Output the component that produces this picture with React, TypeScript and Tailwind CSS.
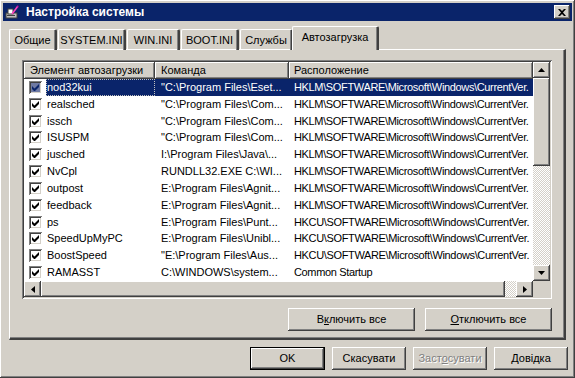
import React from "react";

const raised =
  "shadow-[inset_-1px_-1px_#404040,inset_1px_1px_#ffffff,inset_-2px_-2px_#808080,inset_2px_2px_#d4d0c8]";
const sunken =
  "shadow-[inset_1px_1px_#808080,inset_-1px_-1px_#ffffff,inset_2px_2px_#404040,inset_-2px_-2px_#d4d0c8]";
const checker =
  "bg-[repeating-conic-gradient(#ffffff_0_25%,#d4d0c8_0_50%)] bg-[length:2px_2px]";

const rows = [
  ["nod32kui", "\"C:\\Program Files\\Eset...", "HKLM\\SOFTWARE\\Microsoft\\Windows\\CurrentVer."],
  ["realsched", "\"C:\\Program Files\\Com...", "HKLM\\SOFTWARE\\Microsoft\\Windows\\CurrentVer."],
  ["issch", "\"C:\\Program Files\\Com...", "HKLM\\SOFTWARE\\Microsoft\\Windows\\CurrentVer."],
  ["ISUSPM", "\"C:\\Program Files\\Com...", "HKLM\\SOFTWARE\\Microsoft\\Windows\\CurrentVer."],
  ["jusched", "I:\\Program Files\\Java\\...", "HKLM\\SOFTWARE\\Microsoft\\Windows\\CurrentVer."],
  ["NvCpl", "RUNDLL32.EXE C:\\WI...", "HKLM\\SOFTWARE\\Microsoft\\Windows\\CurrentVer."],
  ["outpost", "E:\\Program Files\\Agnit...", "HKLM\\SOFTWARE\\Microsoft\\Windows\\CurrentVer."],
  ["feedback", "E:\\Program Files\\Agnit...", "HKLM\\SOFTWARE\\Microsoft\\Windows\\CurrentVer."],
  ["ps", "E:\\Program Files\\Punt...", "HKCU\\SOFTWARE\\Microsoft\\Windows\\CurrentVer."],
  ["SpeedUpMyPC", "E:\\Program Files\\Unibl...", "HKCU\\SOFTWARE\\Microsoft\\Windows\\CurrentVer."],
  ["BoostSpeed", "\"E:\\Program Files\\Aus...", "HKCU\\SOFTWARE\\Microsoft\\Windows\\CurrentVer."],
  ["RAMASST", "C:\\WINDOWS\\system...", "Common Startup"],
];

const tabs = [
  { t: "Общие", w: "w-[48px]" },
  { t: "SYSTEM.INI", w: "w-[68px]" },
  { t: "WIN.INI", w: "w-[53px]" },
  { t: "BOOT.INI", w: "w-[58px]" },
  { t: "Службы", w: "w-[53px]" },
];

function Check({ selected }: { selected?: boolean }) {
  return (
    <div
      className={`w-[13px] h-[13px] flex items-center justify-center ${sunken} ${
        selected ? "bg-[#6f7aa3]" : "bg-white"
      }`}
    >
      <svg width="7" height="7" viewBox="0 0 7 7">
        <path d="M0 2v3l2 2h1l4-4V0L2.5 4.5z" fill={selected ? "#0a246a" : "#000"} />
      </svg>
    </div>
  );
}

function Arrow({ dir }: { dir: "up" | "down" | "left" | "right" }) {
  const d = {
    up: "M3.5 0L7 4H0z",
    down: "M0 0h7L3.5 4z",
    left: "M4 0v7L0 3.5z",
    right: "M0 0l4 3.5L0 7z",
  }[dir];
  const w = dir === "up" || dir === "down" ? 7 : 4;
  const h = dir === "up" || dir === "down" ? 4 : 7;
  return (
    <div className={`w-[17px] h-[16px] shrink-0 bg-[#d4d0c8] flex items-center justify-center ${raised}`}>
      <svg width={w} height={h} viewBox={`0 0 ${w} ${h}`}>
        <path d={d} fill="#000" />
      </svg>
    </div>
  );
}

function Btn({
  children,
  w,
  def,
  disabled,
}: {
  children: React.ReactNode;
  w: string;
  def?: boolean;
  disabled?: boolean;
}) {
  return (
    <div className={`${w} h-[23px] ${def ? "border border-black" : ""} shrink-0`}>
      <div
        className={`w-full h-full flex items-center justify-center ${raised} ${
          disabled ? "text-[#808080] [text-shadow:1px_1px_#ffffff]" : "text-black"
        }`}
      >
        {children}
      </div>
    </div>
  );
}

export default function App() {
  return (
    <div
      className={`w-[575px] h-[378px] bg-[#d4d0c8] p-[3px] flex flex-col text-[11px] leading-none text-black ${raised}`}
      style={{ fontFamily: '"Liberation Sans", Arial, sans-serif' }}
    >
      {/* title bar */}
      <div className="h-[18px] bg-[#0a246a] flex items-center px-[2px] shrink-0">
        <svg width="16" height="16" viewBox="0 0 16 16">
          <rect x="1" y="9" width="11" height="5" fill="#c0c0c0" stroke="#404040" strokeWidth="1" />
          <rect x="3" y="5" width="5" height="5" fill="#ffffff" stroke="#404040" strokeWidth="1" />
          <rect x="2" y="11" width="8" height="1" fill="#404040" />
          <path d="M7 10L13 2" stroke="#ff40c0" strokeWidth="1.5" />
          <path d="M12 1l2 1-1 2z" fill="#800080" />
        </svg>
        <span className="ml-[5px] text-white font-bold text-[12px]">Настройка системы</span>
        <div className={`ml-auto w-[16px] h-[14px] bg-[#d4d0c8] flex items-center justify-center ${raised}`}>
          <svg width="8" height="7" viewBox="0 0 8 7">
            <path d="M0 0h2l2 2 2-2h2L5 3.5 8 7H6L4 5 2 7H0l3-3.5z" fill="#000" />
          </svg>
        </div>
      </div>

      {/* tabs */}
      <div className="flex items-end pl-[6px] mt-[5px] h-[24px] relative z-10">
        {tabs.map(({ t, w }) => (
          <div
            key={t}
            className={`${w} h-[21px] shrink-0 flex items-center justify-center border-l border-t border-white border-r-2 border-r-[#404040] rounded-t-[2px] mr-[1px] shadow-[inset_-1px_0_#808080]`}
          >
            {t}
          </div>
        ))}
        <div className="w-[87px] h-[24px] -ml-[2px] shrink-0 flex items-center justify-center bg-[#d4d0c8] border-l border-t border-white border-r-2 border-r-[#404040] rounded-t-[2px] shadow-[inset_-1px_0_#808080] pb-[2px]">
          Автозагрузка
        </div>
      </div>

      {/* tab panel */}
      <div className="mx-[6px] h-[291px] -mt-[1px] border-l border-t border-white border-r-2 border-b-2 border-r-[#404040] border-b-[#404040] shadow-[inset_-1px_-1px_#808080] flex flex-col px-[12px] pt-[10px]">
        {/* list */}
        <div className={`h-[239px] bg-white p-[2px] flex flex-col ${sunken}`}>
          <div className="flex flex-1 min-h-0">
            <div className="flex-1 flex flex-col min-w-0">
              {/* header */}
              <div className="flex h-[17px] shrink-0">
                <div className={`w-[131px] bg-[#d4d0c8] flex items-center pl-[6px] ${raised}`}>Элемент автозагрузки</div>
                <div className={`w-[134px] bg-[#d4d0c8] flex items-center pl-[6px] ${raised}`}>Команда</div>
                <div className={`flex-1 bg-[#d4d0c8] flex items-center pl-[5px] ${raised}`}>Расположение</div>
              </div>
              {rows.map((r, i) => {
                const sel = i === 0;
                return (
                  <div key={r[0]} className="flex h-[17px] items-center whitespace-nowrap overflow-hidden">
                    <div className="w-[131px] flex items-center pl-[5px] shrink-0">
                      <Check selected={sel} />
                      <div
                        className={`ml-[4px] flex-1 h-[17px] flex items-center pl-[1px] ${
                          sel ? "bg-[#0a246a] text-white outline outline-1 outline-dotted outline-[#c0c0c0] -outline-offset-1" : ""
                        }`}
                      >
                        {r[0]}
                      </div>
                    </div>
                    <div className={`w-[134px] h-[17px] flex items-center pl-[6px] shrink-0 ${sel ? "bg-[#0a246a] text-white" : ""}`}>
                      {r[1]}
                    </div>
                    <div
                      className={`flex-1 h-[17px] flex items-center pl-[5px] tracking-[-0.35px] ${sel ? "bg-[#0a246a] text-white" : ""}`}
                    >
                      {r[2]}
                    </div>
                  </div>
                );
              })}
            </div>
            {/* vertical scrollbar */}
            <div className="w-[17px] flex flex-col shrink-0">
              <Arrow dir="up" />
              <div className={`h-[88px] bg-[#d4d0c8] ${raised}`} />
              <div className={`flex-1 ${checker}`} />
              <Arrow dir="down" />
            </div>
          </div>
          {/* horizontal scrollbar */}
          <div className="flex h-[16px] shrink-0">
            <Arrow dir="left" />
            <div className={`w-[464px] bg-[#d4d0c8] ${raised}`} />
            <div className={`flex-1 ${checker}`} />
            <Arrow dir="right" />
            <div className="w-[17px] bg-[#d4d0c8]" />
          </div>
        </div>

        <div className="flex justify-end gap-[10px] mt-[9px]">
          <Btn w="w-[127px]">
            <span>
              В<u>к</u>лючить все
            </span>
          </Btn>
          <Btn w="w-[127px]">
            <span>
              <u>О</u>тключить все
            </span>
          </Btn>
        </div>
      </div>

      {/* bottom buttons */}
      <div className="flex justify-end gap-[7px] mt-[7px] pr-[4px]">
        <Btn w="w-[75px]" def>
          OK
        </Btn>
        <Btn w="w-[74px]">Скасувати</Btn>
        <Btn w="w-[74px]" disabled>
          <span>
            Заст<u>о</u>сувати
          </span>
        </Btn>
        <Btn w="w-[74px]">Довідка</Btn>
      </div>
    </div>
  );
}
